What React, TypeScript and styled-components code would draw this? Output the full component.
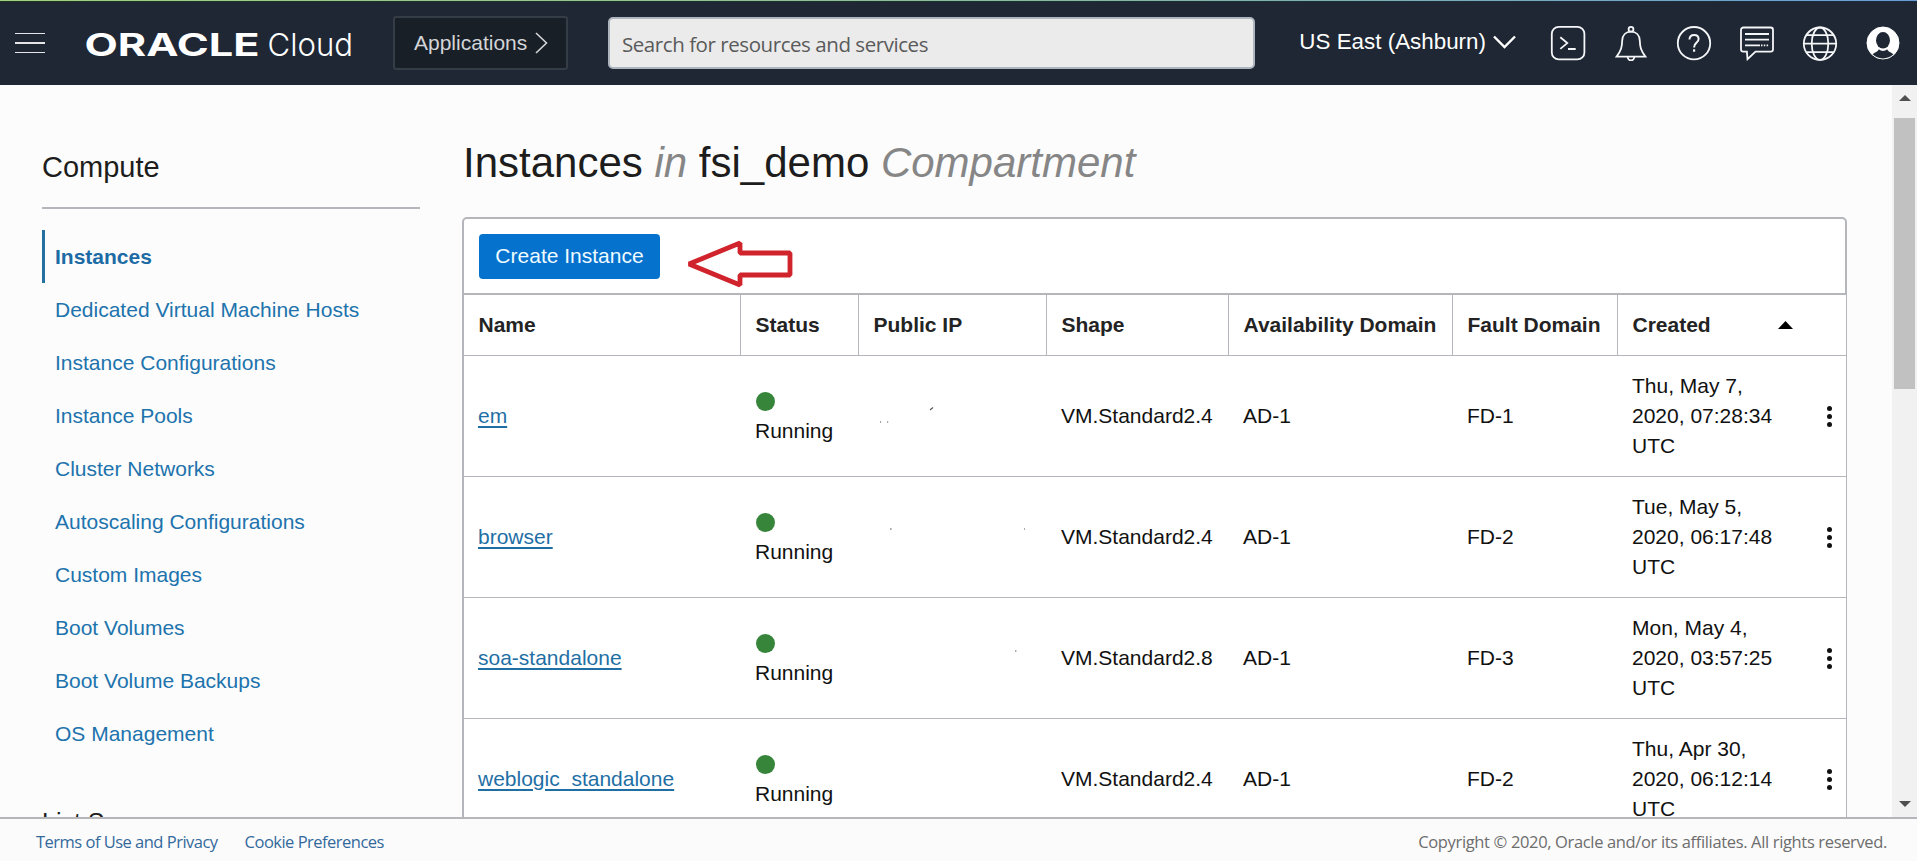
import React from "react";
import styled, { createGlobalStyle } from "styled-components";

const sans = `"Liberation Sans", Arial, sans-serif`;
const humanist = `"Open Sans", "Noto Sans", sans-serif`;
const line = "#b4b6bb";
const link = "#2073ad";

const GlobalStyle = createGlobalStyle`
  *, *::before, *::after { box-sizing: border-box; }
  html, body { margin: 0; padding: 0; }
  body { background: #fcfcfc; color: #1d1d1d; font: 21px/30px ${sans}; overflow: hidden; }
`;

const Shell = styled.div`
  display: grid;
  grid-template-rows: 85px minmax(0, 1fr) 44px;
  width: 100vw;
  height: 100vh;
`;

const Header = styled.header`
  display: flex;
  align-items: flex-start;
  padding: 0 16px 0 15px;
  background:
    linear-gradient(90deg, #a3cf82, #8bbd9c 50%, #6b9bd6) 0 0 / 100% 1px no-repeat,
    linear-gradient(90deg, #1b3520, #1b3030 50%, #1a2c3e) 0 1px / 100% 1px no-repeat,
    #1e2733;
`;

const MenuButton = styled.div`
  display: flex;
  flex-direction: column;
  gap: 8px;
  width: 30px;
  margin: 32.5px 42px 0 0;
`;

const MenuBar = styled.span`
  height: 1.6px;
  background: #e3e5e8;
`;

const Logo = styled.svg`
  width: 266px;
  height: 40px;
  margin: 23px 40px 0 0;
  flex: none;
  overflow: visible;
`;

const AppsButton = styled.div`
  display: flex;
  align-items: center;
  gap: 8px;
  width: 175px;
  height: 54px;
  margin-top: 16px;
  padding: 0 0 1px 19px;
  border: 2px solid #343c46;
  border-radius: 3px;
  background: #191f27;
  color: #d3d5d8;
`;

const Search = styled.div`
  width: 647px;
  height: 52px;
  margin: 17px 0 0 40px;
  padding: 2px 0 0 12px;
  border: 2px solid #aeb5bf;
  border-radius: 5px;
  background: #ebebeb;
  color: #5a5a5a;
  font: 20.5px/46px ${humanist};
  letter-spacing: -0.44px;
`;

const Region = styled.div`
  display: flex;
  align-items: center;
  gap: 7px;
  margin: 27px 0 0 auto;
  color: #fff;
  font-size: 22.4px;
`;

const IconRow = styled.div`
  display: flex;
  gap: 27px;
  margin: 25px 0 0 34px;
`;

const Icon = styled.svg`
  width: 36px;
  height: 36px;
  fill: none;
  stroke: #f4f6f8;
  stroke-width: 1.8;
`;

const Main = styled.main`
  display: flex;
  overflow: hidden;
`;

const Sidebar = styled.aside`
  width: 378px;
  margin: 65px 42px 0 42px;
  flex: none;
`;

const SideTitle = styled.h2<{ $ruled?: boolean }>`
  margin: 0;
  padding-bottom: 23px;
  border-bottom: ${(p) => (p.$ruled ? `2px solid ${line}` : "none")};
  font-size: ${(p) => (p.$ruled ? 29 : 25)}px;
  line-height: 34px;
  font-weight: 400;
`;

const Nav = styled.nav`
  margin: 21px 0 45px;
`;

const NavItem = styled.a<{ $active?: boolean }>`
  display: block;
  height: 53px;
  padding-left: 10px;
  border-left: 3px solid ${(p) => (p.$active ? "#2470a0" : "transparent")};
  color: ${(p) => (p.$active ? "#1c6ba5" : link)};
  font-weight: ${(p) => (p.$active ? 700 : 400)};
  line-height: 53px;
`;

const Content = styled.section`
  width: 1385px;
  flex: none;
`;

const Title = styled.h1`
  margin: 53px 0 29px 1px;
  font-size: 42px;
  line-height: 50px;
  font-weight: 400;
  white-space: nowrap;
`;

const Muted = styled.em`
  color: #868686;
`;

const Toolbar = styled.div`
  display: flex;
  align-items: flex-start;
  height: 78px;
  padding: 15px;
  border: 2px solid ${line};
  border-radius: 5px 5px 0 0;
  background: #fff;
`;

const CreateButton = styled.button`
  width: 181px;
  height: 45px;
  padding: 0 0 2px;
  border: 0;
  border-radius: 4px;
  background: #0572ce;
  color: #f0fbff;
  font: 21px/30px ${sans};
  white-space: nowrap;
`;

const PointerArrow = styled.svg`
  width: 108px;
  height: 50px;
  margin: 5px 0 0 25px;
`;

const Table = styled.div`
  border-left: 2px solid ${line};
  border-right: 1px solid ${line};
  background: #fff;
`;

const Row = styled.div<{ $head?: boolean }>`
  display: grid;
  grid-template-columns: 277px 118px 188px 182px 224px 165px 180px 48px;
  grid-template-rows: minmax(0, 1fr);
  align-items: ${(p) => (p.$head ? "stretch" : "center")};
  height: ${(p) => (p.$head ? 61 : 121)}px;
  border-bottom: 1px solid ${line};
  color: ${(p) => (p.$head ? "#232323" : "#111")};
  font-weight: ${(p) => (p.$head ? 700 : 400)};
`;

const HeadCell = styled.div<{ $last?: boolean }>`
  display: flex;
  align-items: center;
  justify-content: space-between;
  grid-column: ${(p) => (p.$last ? "span 2" : "auto")};
  padding: 0 ${(p) => (p.$last ? 53 : 0)}px 0 14.5px;
  border-right: ${(p) => (p.$last ? "0" : `1px solid ${line}`)};
  white-space: nowrap;
`;

const Cell = styled.div`
  padding-left: 14px;
`;

const IpMarks = styled.svg`
  display: block;
  width: 188px;
  height: 120px;
  stroke: #555;
  stroke-width: 1.2;
`;

const DateCell = styled(Cell)`
  width: 162px;
`;

const NameLink = styled.a`
  color: #1f6fa5;
  text-decoration: underline;
  text-decoration-thickness: 2px;
  text-underline-offset: 3px;
`;

const Status = styled.div`
  display: flex;
  flex-direction: column;
`;

const Dot = styled.span`
  width: 19px;
  height: 19px;
  margin: 6px 0 5px 1px;
  border-radius: 50%;
  background: #36853a;
`;

const RowMenu = styled.div`
  display: flex;
  flex-direction: column;
  gap: 3px;
  padding-left: 29px;
`;

const RowMenuDot = styled.span`
  width: 5px;
  height: 5px;
  border-radius: 50%;
  background: #111;
`;

const ScrollTrack = styled.div`
  display: flex;
  flex-direction: column;
  align-items: center;
  width: 25px;
  margin-left: auto;
  padding: 10px 0;
  background: #f1f1f1;
`;

const ScrollThumb = styled.div`
  width: 21px;
  height: 271px;
  margin: 17px 0 auto;
  background: #c1c1c1;
`;

const ScrollArrow = styled.svg`
  width: 12px;
  height: 6px;
  fill: #4f4f4f;
  flex: none;
`;

const Footer = styled.footer`
  display: flex;
  gap: 27px;
  padding: 0 30px 0 36px;
  border-top: 2px solid ${line};
  background: #fbfbfb;
  font: 16.5px/46px ${humanist};
`;

const FooterLink = styled.a`
  color: #33699b;
  letter-spacing: -0.51px;
`;

const Copyright = styled.span`
  margin-left: auto;
  color: #6d6d6d;
  letter-spacing: -0.35px;
`;

const navItems = [
  "Instances",
  "Dedicated Virtual Machine Hosts",
  "Instance Configurations",
  "Instance Pools",
  "Cluster Networks",
  "Autoscaling Configurations",
  "Custom Images",
  "Boot Volumes",
  "Boot Volume Backups",
  "OS Management",
];

const columns = ["Name", "Status", "Public IP", "Shape", "Availability Domain", "Fault Domain"];

const instances = [
  { name: "em", shape: "VM.Standard2.4", fd: "FD-1", created: "Thu, May 7, 2020, 07:28:34 UTC", marks: "M71 54l3-2.5M21 66h1.2M28 66h1.2" },
  { name: "browser", shape: "VM.Standard2.4", fd: "FD-2", created: "Tue, May 5, 2020, 06:17:48 UTC", marks: "M31 52h1.6M165 52h1" },
  { name: "soa-standalone", shape: "VM.Standard2.8", fd: "FD-3", created: "Mon, May 4, 2020, 03:57:25 UTC", marks: "M156 53h1.4" },
  { name: "weblogic_standalone", shape: "VM.Standard2.4", fd: "FD-2", created: "Thu, Apr 30, 2020, 06:12:14 UTC", marks: "" },
];

const HeaderIcons = () => (
  <IconRow>
    <Icon viewBox="0 0 36 36">
      <rect x="1.8" y="1.8" width="32.6" height="32.6" rx="7" />
      <path d="M10.3 12.3l7 5.8-7 5.8M18 24h7.7" />
    </Icon>
    <Icon viewBox="0 0 36 36">
      <circle cx="18" cy="4.2" r="2.4" />
      <path d="M18 6.6c-5.2 0-8.6 3.6-8.8 9-.2 6.3-.8 9.600-5.600 16h28.800c-4.800-6.400-5.400-9.700-5.600-16-.2-5.400-3.600-9-8.800-9z" />
      <path d="M14.600 32c.3 2.300 1.600 3.500 3.400 3.500s3.100-1.200 3.400-3.500" />
    </Icon>
    <Icon viewBox="0 0 36 36">
      <circle cx="18" cy="18.200" r="16.200" />
      <path d="M13.500 14.600c0-3 1.900-4.700 4.600-4.700s4.500 1.600 4.500 4.200c0 3.600-4.400 3.900-4.400 7.700v.8" strokeWidth="2" />
      <path d="M18.100 24.300v2.400" strokeWidth="2.200" />
    </Icon>
    <Icon viewBox="0 0 36 36">
      <path d="M4.400 2.500h27.200a2.400 2.400 0 0 1 2.400 2.400v19.300a2.400 2.400 0 0 1-2.400 2.400H16.500l-8 7.600-.6-7.600H4.400A2.400 2.400 0 0 1 2 24.200V4.900a2.400 2.400 0 0 1 2.400-2.400z" />
      <path d="M6 9h24M6 14.600h24M6 20.400h15" />
      <path d="M22 20.400h8" strokeDasharray="1.500 1.300" />
    </Icon>
    <Icon viewBox="0 0 36 36">
      <circle cx="18" cy="18.700" r="16.200" />
      <ellipse cx="18" cy="18.700" rx="8.300" ry="16.200" />
      <path d="M1.800 18.700h32.400M4.500 10.200h27M4.500 27.200h27" />
    </Icon>
    <Icon viewBox="0 0 36 36">
      <circle cx="18" cy="18" r="16" fill="#fff" stroke="#fff" strokeWidth="1" />
      <ellipse cx="18" cy="15.300" rx="7" ry="8.300" fill="#1e2733" stroke="none" />
      <path d="M13.800 24.300c1.500 1.300 2.700 1.700 4.200 1.700s2.700-.4 4.200-1.700c.5 2.200 3.300 2.500 6.200 5-2.800 2.700-6.300 4.100-10.400 4.100s-7.600-1.400-10.400-4.100c2.900-2.500 5.700-2.800 6.200-5z" fill="#1e2733" stroke="none" />
    </Icon>
  </IconRow>
);

export default function App() {
  return (
    <>
      <GlobalStyle />
      <Shell>
        <Header>
          <MenuButton>
            <MenuBar />
            <MenuBar />
            <MenuBar />
          </MenuButton>
          <Logo viewBox="0 0 266 40" fill="#fff">
            <text x="-2.500" y="32.500" fontFamily="Inter, sans-serif" fontWeight="700" fontSize="31" textLength="175" lengthAdjust="spacingAndGlyphs">
              ORACLE
            </text>
            <text x="180.500" y="32.500" fontFamily="Inter, sans-serif" fontWeight="300" fontSize="31.500" textLength="85.500" lengthAdjust="spacingAndGlyphs">
              Cloud
            </text>
          </Logo>
          <AppsButton>
            Applications
            <svg width="13" height="22" viewBox="0 0 13 22" fill="none" stroke="#d3d5d8" strokeWidth="1.6">
              <path d="M1 1l10.500 10L1 21" />
            </svg>
          </AppsButton>
          <Search>Search for resources and services</Search>
          <Region>
            US East (Ashburn)
            <svg width="23" height="14" viewBox="0 0 23 14" fill="none" stroke="#fff" strokeWidth="2.400">
              <path d="M1 1.500l10.500 10.500L22 1.500" />
            </svg>
          </Region>
          <HeaderIcons />
        </Header>
        <Main>
          <Sidebar>
            <SideTitle $ruled>Compute</SideTitle>
            <Nav>
              {navItems.map((item, i) => (
                <NavItem key={item} $active={i === 0}>
                  {item}
                </NavItem>
              ))}
            </Nav>
            <SideTitle>List Scope</SideTitle>
          </Sidebar>
          <Content>
            <Title>
              Instances <Muted>in</Muted> fsi_demo <Muted>Compartment</Muted>
            </Title>
            <Toolbar>
              <CreateButton>Create Instance</CreateButton>
              <PointerArrow viewBox="0 0 108 50" fill="none" stroke="#d0232b" strokeWidth="4.800" strokeLinejoin="bevel">
                <path d="M4 25L55 4v10h50v22H55v10z" />
              </PointerArrow>
            </Toolbar>
            <Table>
              <Row $head>
                {columns.map((c) => (
                  <HeadCell key={c}>{c}</HeadCell>
                ))}
                <HeadCell $last>
                  Created
                  <svg width="15" height="8" viewBox="0 0 15 8">
                    <path d="M0 8L7.500 0 15 8z" />
                  </svg>
                </HeadCell>
              </Row>
              {instances.map((it) => (
                <Row key={it.name}>
                  <Cell>
                    <NameLink>{it.name}</NameLink>
                  </Cell>
                  <Cell>
                    <Status>
                      <Dot />
                      Running
                    </Status>
                  </Cell>
                  <IpMarks viewBox="0 0 188 120">
                    <path d={it.marks} />
                  </IpMarks>
                  <Cell>{it.shape}</Cell>
                  <Cell>AD-1</Cell>
                  <Cell>{it.fd}</Cell>
                  <DateCell>{it.created}</DateCell>
                  <RowMenu>
                    <RowMenuDot />
                    <RowMenuDot />
                    <RowMenuDot />
                  </RowMenu>
                </Row>
              ))}
            </Table>
          </Content>
          <ScrollTrack>
            <ScrollArrow viewBox="0 0 12 6">
              <path d="M0 6L6 0l6 6z" />
            </ScrollArrow>
            <ScrollThumb />
            <ScrollArrow viewBox="0 0 12 6">
              <path d="M0 0h12L6 6z" />
            </ScrollArrow>
          </ScrollTrack>
        </Main>
        <Footer>
          <FooterLink>Terms of Use and Privacy</FooterLink>
          <FooterLink>Cookie Preferences</FooterLink>
          <Copyright>Copyright © 2020, Oracle and/or its affiliates. All rights reserved.</Copyright>
        </Footer>
      </Shell>
    </>
  );
}
